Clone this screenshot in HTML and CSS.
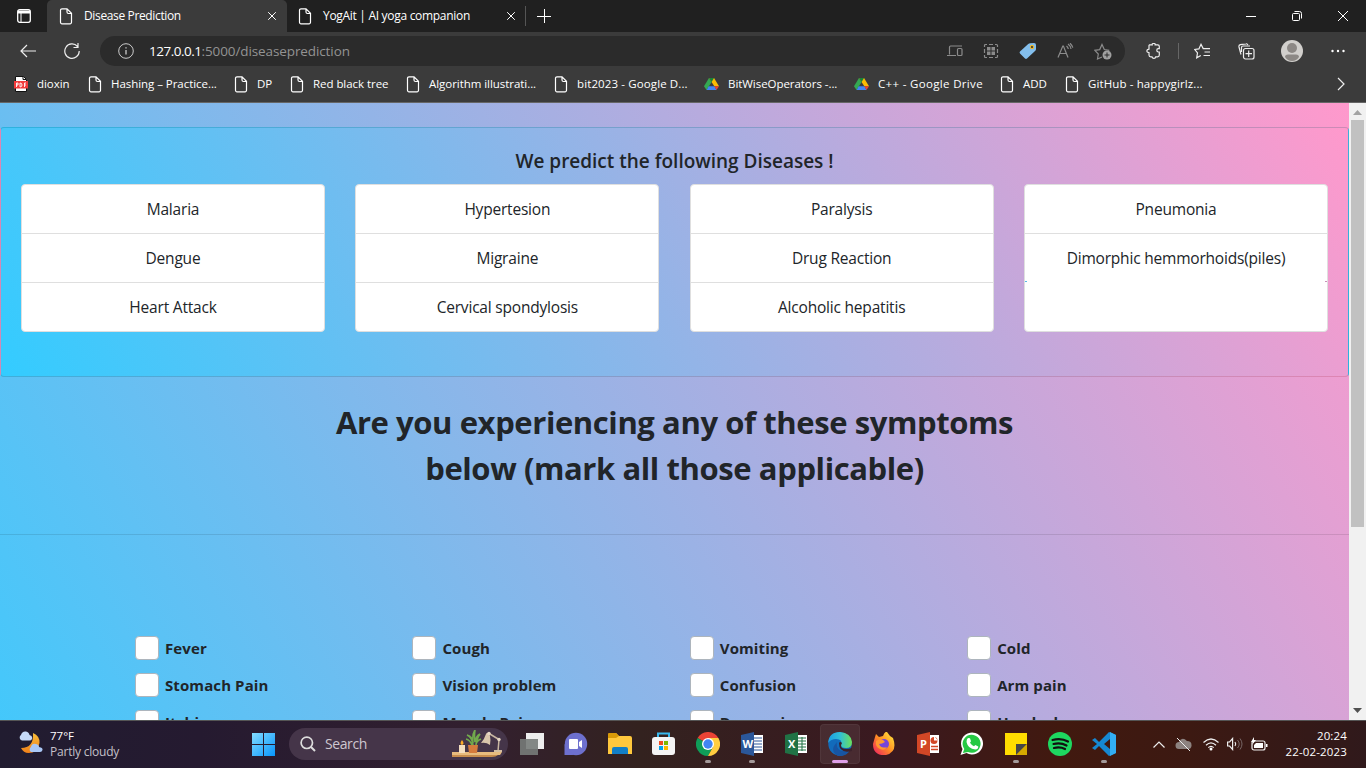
FILE: index.html
```html
<!DOCTYPE html>
<html lang="en">
<head>
<meta charset="utf-8">
<title>Disease Prediction</title>
<link rel="stylesheet" href="styles.css">
</head>
<body>
<svg class="defs" width="0" height="0">
  <symbol id="doc" viewBox="0 0 14 17"><path d="M3 .8h5l4.500 4.500v9a1.500 1.500 0 0 1-1.500 1.500H3a1.500 1.500 0 0 1-1.500-1.500V2.300A1.500 1.500 0 0 1 3 .8zM8 1v3a1.500 1.500 0 0 0 1.500 1.500h3" fill="none" stroke="#fff" stroke-width="1.200"/></symbol>
  <symbol id="drive" viewBox="0 0 16 14"><path d="M5.300.5 0 9.500 2.700 13.500 8 5.200z" fill="#34a853"/><path d="M10.700.5H5.300L11 9.500h5z" fill="#fbbc04"/><path d="M5.300.5h5.400L8 5z" fill="#188038"/><path d="M5 9.500h6.200l2.100 4H2.700z" fill="#4285f4"/><path d="M11 9.500h5l-2.700 4z" fill="#ea4335"/></symbol>
</svg>
<header class="browser">
  <div class="tabs">
    <div class="tab-menu"><svg width="14" height="14" viewBox="0 0 14 14"><rect x=".7" y=".7" width="12.600" height="12.600" rx="2" fill="none" stroke="#fff" stroke-width="1.300"/><path d="M1 1.500h12v3H1z" fill="#fff"/><path d="M4 4v9" stroke="#fff"/></svg></div>
    <div class="tab active"><svg class="doc"><use href="#doc"/></svg><span class="t1">Disease Prediction</span><svg class="close" viewBox="0 0 8 8"><path d="M.2.200l7.600 7.600m0-7.600l-7.600 7.600"/></svg></div>
    <div class="tab"><svg class="doc"><use href="#doc"/></svg><span class="t2">YogAit | AI yoga companion</span><svg class="close" viewBox="0 0 8 8"><path d="M.2.200l7.600 7.600m0-7.600l-7.600 7.600"/></svg></div>
    <i class="tab-line"></i>
    <svg class="plus" width="14" height="14" viewBox="0 0 14 14"><path d="M7.500 0v14M0 7.500h14" stroke="#fff"/></svg>
    <div class="window-buttons">
      <svg width="10" height="10" viewBox="0 0 10 10"><path d="M0 5.500h10"/></svg>
      <svg width="10" height="10" viewBox="0 0 10 10"><rect x=".5" y="2.500" width="7" height="7" rx="1"/><path d="M2.500.5h5a2 2 0 0 1 2 2v5"/></svg>
      <svg width="10" height="10" viewBox="0 0 10 10"><path d="M0 0l10 10m0-10L0 10"/></svg>
    </div>
  </div>
  <div class="toolbar">
    <svg class="back" width="16" height="14" viewBox="0 0 16 14"><path d="M16 7H1m6-6L1 7l6 6" class="line"/></svg>
    <svg class="reload" width="16" height="16" viewBox="0 0 16 16"><path d="M13.500 3.500A7.200 7.200 0 1 0 15.200 8M14 0v4.500H9.500" class="line"/></svg>
    <div class="address">
      <svg width="16" height="16" viewBox="0 0 16 16"><circle cx="8" cy="8" r="7.300" fill="none" stroke="#ccc"/><path d="M8 7v4.500M8 4.300v1.300" stroke="#ccc" stroke-width="1.300"/></svg>
      <span class="url"><b>127.0.0.1</b>:5000/diseaseprediction</span>
      <div class="address-icons">
        <svg width="16" height="16" viewBox="0 0 16 16"><path d="M2.500 11.500V4a1 1 0 0 1 1-1H15M0 12.500h9" class="dim"/><rect x="10.500" y="5.500" width="4.500" height="7" rx="1" class="dim"/></svg>
        <svg width="16" height="16" viewBox="0 0 16 16"><path d="M1.500 4V2.500a1 1 0 0 1 1-1H4M12 1.500h1.500a1 1 0 0 1 1 1V4M14.500 12v1.500a1 1 0 0 1-1 1H12M4 14.500H2.500a1 1 0 0 1-1-1V12M6 1.500h4M6 14.500h4M1.500 6v4M14.500 6v4" class="dim"/><path d="M4 4h3.500v3.500H4zM8.500 4H12v3.500H8.500zM4 8.500h3.500V12H4zM8.500 8.500H12V12H8.500z" fill="#8b8b8b"/></svg>
        <svg width="18" height="18" viewBox="0 0 18 18"><path d="M1 9.500 9.200 2q.8-.7 2-.7L15 1q2 0 2 2v4q0 1-.7 1.800L8 16.500q-1 .9-2 0L1 11.500q-.9-1 0-2z" fill="#83beec"/><circle cx="13" cy="5" r="1.700" fill="#564b32" stroke="#f5bd20"/></svg>
        <svg width="17" height="16" viewBox="0 0 17 16"><path d="M1 14.500 5.800 3h.6L11 14.500M2.600 10.500h7M9.500 3q1.500 1.200 1.800 3M11 1q2.700 2 3 5M13 .2q2.200 2 2.800 4.500" class="dim"/></svg>
        <svg width="18" height="17" viewBox="0 0 18 17"><path d="M8 14l-4.500 2 .8-5L.8 7.300l4.900-.7L8 1.500l2.300 5 5 .8" class="dim"/><circle cx="13" cy="12" r="4.500" fill="#a0a0a0"/><path d="M13 9.500v5M10.500 12h5" stroke="#2b2b2b"/></svg>
      </div>
    </div>
    <div class="tool-icons">
      <svg width="16" height="16" viewBox="0 0 16 16"><path d="M3.500 1.800h2.700q-.3-1.300 1.500-1.300t1.500 1.300h2.500q1.600 0 1.600 1.600v2.200h-1q-1.500 0-1.500 1.700T12.300 9h1v3q0 1.800-1.800 1.800H9.700q-.2 1.500-1.800 1.500T6 13.800H4.800Q3 13.800 3 12V9.700Q.8 9.500.8 8T3 6.200V2.500z" class="line"/></svg>
      <i></i>
      <svg class="fav" width="17" height="16" viewBox="0 0 17 16"><path d="M6.800 12.500l-4.100 2.300.8-4.900L.8 6.500l4.100-.6L7 1.300l2.200 4.300H16M10.500 9H16M9.500 12.500H16" class="line"/></svg>
      <svg class="coll" width="17" height="17" viewBox="0 0 17 17"><rect x="5.500" y="5.500" width="10.500" height="10.500" rx="2" class="line"/><path d="M10.700 7.500v6.500M7.500 10.700H14M3 11.500 1 4q-.4-1.800 1.300-2.300L8 .8q1.300-.3 1.900 1.200M3.500 9V4.500Q3.500 3 5 3h7" class="line"/></svg>
      <svg class="avatar" width="22" height="22" viewBox="0 0 22 22"><circle cx="11" cy="11" r="11" fill="#d1cfcc"/><circle cx="11" cy="8" r="5" fill="#8c8885"/><path d="M4 17q0-2.500 3-2.500h8q3 0 3 2.500-2.500 4-7 4t-7-4z" fill="#8c8885"/></svg>
      <svg class="dots" width="14" height="4" viewBox="0 0 14 4"><g fill="#fff"><circle cx="1.500" cy="2" r="1.200"/><circle cx="7" cy="2" r="1.200"/><circle cx="12.500" cy="2" r="1.200"/></g></svg>
    </div>
  </div>
  <nav class="bookmarks">
    <a class="k0"><svg width="14" height="16" viewBox="0 0 14 16"><path d="M1.500.5h8l3 3v12h-11z" fill="#fff" stroke="#111"/><path d="M9 .5v3h3" fill="none" stroke="#111"/><path d="M0 5h14v7.500H0z" fill="#f33b3b"/><path d="M2.500 11V7H4v2H2.500M6 7v4q2 0 2-2T6 7zM10.500 11V7H12M10.500 9H12" stroke="#fff" stroke-width=".9" fill="none"/></svg><span>dioxin</span></a>
    <a class="k1"><svg class="doc"><use href="#doc"/></svg><span>Hashing – Practice...</span></a>
    <a class="k2"><svg class="doc"><use href="#doc"/></svg><span>DP</span></a>
    <a class="k3"><svg class="doc"><use href="#doc"/></svg><span>Red black tree</span></a>
    <a class="k4"><svg class="doc"><use href="#doc"/></svg><span>Algorithm illustrati...</span></a>
    <a class="k5"><svg class="doc"><use href="#doc"/></svg><span>bit2023 - Google D...</span></a>
    <a class="k6"><svg width="15" height="14"><use href="#drive"/></svg><span>BitWiseOperators -...</span></a>
    <a class="k7"><svg width="15" height="14"><use href="#drive"/></svg><span>C++ - Google Drive</span></a>
    <a class="k8"><svg class="doc"><use href="#doc"/></svg><span>ADD</span></a>
    <a class="k9"><svg class="doc"><use href="#doc"/></svg><span>GitHub - happygirlz...</span></a>
    <svg class="more" width="8" height="14" viewBox="0 0 8 14"><path d="M1 1l6 6-6 6" class="line"/></svg>
  </nav>
</header>
<div class="viewport">
  <main class="page">
    <section class="card">
      <h5>We predict the following Diseases !</h5>
      <div class="lists">
        <ul><li>Malaria</li><li>Dengue</li><li>Heart Attack</li></ul>
        <ul><li>Hypertesion</li><li>Migraine</li><li>Cervical spondylosis</li></ul>
        <ul><li>Paralysis</li><li>Drug Reaction</li><li>Alcoholic hepatitis</li></ul>
        <ul class="short"><li>Pneumonia</li><li>Dimorphic hemmorhoids(piles)</li><li></li></ul>
      </div>
    </section>
    <h1>Are you experiencing any of these symptoms<br>below (mark all those applicable)</h1>
    <hr>
    <div class="symptoms">
      <label><i></i>Fever</label><label><i></i>Cough</label><label><i></i>Vomiting</label><label><i></i>Cold</label>
      <label><i></i>Stomach Pain</label><label><i></i>Vision problem</label><label><i></i>Confusion</label><label><i></i>Arm pain</label>
      <label><i></i>Itching</label><label><i></i>Muscle Pain</label><label><i></i>Depression</label><label><i></i>Headache</label>
    </div>
  </main>
  <aside class="scrollbar"><svg width="9" height="5"><path d="M0 5l4.500-5L9 5z" fill="#a3a3a3"/></svg><div class="thumb"></div><svg class="down" width="9" height="5"><path d="M0 0l4.500 5L9 0z" fill="#505050"/></svg></aside>
</div>
<footer class="taskbar">
  <div class="weather">
    <svg width="25" height="24" viewBox="0 0 25 24"><defs><linearGradient id="moon" x2="0" y2="1"><stop stop-color="#f9bf3a"/><stop offset="1" stop-color="#f08019"/></linearGradient></defs><path d="M15 2q7 3 6.500 10-2 10-11 10-5 0-7.500-5 13 0 12-15z" fill="url(#moon)"/><path d="M3 9a3 3 0 0 1 0-5q1-4 5-3.500 3 .5 3.500 3.500Q15 5 14 8q-.7 1.500-2.500 1.500H4z" fill="#c5daf8"/><path d="M13 21a3 3 0 0 1 0-5q1-4 5-3 3 .5 3 3 4 .5 3.500 3-.5 2-2.500 2z" fill="#aac8f5"/></svg>
    <div><span class="w1">77°F</span><span class="w2">Partly cloudy</span></div>
  </div>
  <svg class="start" width="23" height="23" viewBox="0 0 23 23"><defs><linearGradient id="win" x2="1" y2="1"><stop stop-color="#83dcff"/><stop offset="1" stop-color="#0795fc"/></linearGradient></defs><path d="M0 0h11v11H0zM12 0h11v11H12zM0 12h11v11H0zM12 12h11v11H12z" fill="url(#win)"/></svg>
  <div class="search">
    <svg width="16" height="16" viewBox="0 0 16 16"><circle cx="6.800" cy="6.800" r="5.700" fill="none" stroke="#ddd" stroke-width="1.700"/><path d="M11 11l4 4" stroke="#ddd" stroke-width="2"/></svg><span>Search</span>
    <svg class="plant" width="51" height="28" viewBox="0 0 51 28"><path d="M0 22h50l-2 3H0z" fill="#e7bb7e"/><path d="M0 25h46q-2 2-6 2H0z" fill="#c78d4d"/><path d="M7 15h6v8H7z" fill="#f4dec0"/><path d="M10 10q3 4 0 5-3-1 0-5z" fill="#ffab25"/><path d="M16 15h10l-1 8h-8z" fill="#d57b3c"/><path d="M21 15Q20 7 15 5q6 2 6 8Q20 4 23 0q-1 6 0 12 1-6 5-8-3 4-4 11M20 15q-2-5-6-6M24 15q0-4 5-6" fill="none" stroke="#71a94c" stroke-width="1.600"/><path d="M29 13q3-3 5-9 1-2 3-1l1 3q1 4 0 9-4-3-9-2z" fill="#d9c6ac"/><path d="M37 3.500l10 6-1 12" fill="none" stroke="#c9b7a2" stroke-width="1.500"/><circle cx="37" cy="3.500" r="1.700" fill="#e6d8c5"/><circle cx="47" cy="9.500" r="1.700" fill="#e6d8c5"/><path d="M42 20h8v2h-8z" fill="#d4bea2"/></svg>
  </div>
  <div class="apps">
    <div><svg viewBox="0 0 24 24"><path d="M6 1h18v16H6z" fill="#eee"/><path d="M0 7h18v16H0z" fill="#777b79" opacity=".9"/></svg></div>
    <div><svg viewBox="0 0 24 24"><circle cx="12" cy="12" r="11.200" fill="#6d70ce"/><path d="M.5 23V12l9 11z" fill="#6d70ce"/><rect x="5" y="7" width="9" height="10" rx="1" fill="#fff"/><path d="M15 10l3-2v8l-3-2z" fill="#fff"/></svg></div>
    <div><svg viewBox="0 0 24 24"><path d="M0 3q0-2 2-2h6l3 3h11q2 0 2 2v16H0z" fill="#ffc83d"/><path d="M0 2q0-1 2-1h6l3 3-3 2H0z" fill="#d99a08"/><path d="M4 22v-5q0-2 2-2h12q2 0 2 2v5z" fill="#127fc6"/></svg></div>
    <div><svg viewBox="0 0 24 24"><path d="M6 6V1.500h11V6" fill="none" stroke="#38b8ed" stroke-width="2"/><rect x="0" y="5" width="23" height="18" rx="3" fill="#f4f4f4"/><path d="M7 9h4v4H7z" fill="#f04c22"/><path d="M12 9h4v4h-4z" fill="#7db900"/><path d="M7 14h4v4H7z" fill="#00a3ed"/><path d="M12 14h4v4h-4z" fill="#fdb900"/></svg></div>
    <div class="open"><svg viewBox="0 0 24 24"><path d="M12 12 1.600 6A12 12 0 0 1 22.400 6z" fill="#ea4335"/><path d="M1.600 6A12 12 0 0 0 12 24l5-9-5-3z" fill="#0f9d58"/><path d="M12 24A12 12 0 0 0 22.400 6H12v6l5 3z" fill="#ffcd40"/><circle cx="12" cy="12" r="6" fill="#fff"/><circle cx="12" cy="12" r="4.700" fill="#4285f4"/></svg></div>
    <div class="open"><svg viewBox="0 0 24 24"><path d="M11 3h12v18H11z" fill="#fff"/><path d="M14 6h8M14 9h8M14 12h8M14 15h8M14 18h8" stroke="#2b579a"/><path d="M1 3l13-3v24L1 21z" fill="#2b579a"/><text x="2.500" y="16" class="office">W</text></svg></div>
    <div><svg viewBox="0 0 24 24"><path d="M11 3h12v18H11z" fill="#fff"/><path d="M14 6h8M14 9h8M14 12h8M14 15h8M14 18h8M18 5v14" stroke="#207245"/><path d="M1 3l13-3v24L1 21z" fill="#207245"/><text x="4" y="16" class="office">X</text></svg></div>
    <div class="current"><svg viewBox="0 0 24 24"><defs><linearGradient id="ed" x2="1"><stop stop-color="#1b9de2"/><stop offset=".5" stop-color="#30bfd5"/><stop offset="1" stop-color="#6ce05a"/></linearGradient></defs><circle cx="12" cy="12" r="11.700" fill="#126bbb"/><path d="M0 11Q1 0 12 0q11 1 12 10 0 6-6 6-5 0-5-3 2-6-5-6-5 0-8 4z" fill="url(#ed)"/><path d="M9 10q-2 12 13 8-4 7-12 6-7-4-4-10z" fill="#1755a3"/><path d="M11 11q1-2 3 0-2 3 0 5 4 2 10 0v3q-13 3-13-8z" fill="#3b222b"/></svg></div>
    <div><svg viewBox="0 0 24 24"><defs><linearGradient id="fx" x1="1" x2="0" y2="1"><stop stop-color="#fff33f"/><stop offset=".5" stop-color="#ff8d24"/><stop offset="1" stop-color="#ec1767"/></linearGradient></defs><path d="M3 5l1-3 3 3 4-1q2-5 4-4l3 4 3 2q5 14-7 17Q1 24 1 12z" fill="url(#fx)"/><circle cx="12" cy="12" r="5" fill="#7745da"/><path d="M4 9q6-4 9 1-3 2-6 2 2 5 8 3-2 4-7 2-5-2-4-8z" fill="#ff9930"/></svg></div>
    <div><svg viewBox="0 0 24 24"><path d="M12 3h11v18H12z" fill="#fff"/><circle cx="18" cy="8.500" r="3.500" fill="#d24726"/><path d="M18 8.500V5h1l3 3.500z" fill="#fff"/><path d="M15 14.500h7M15 17.500h7" stroke="#d24726" stroke-width="1.500"/><path d="M1 3l13-3v24L1 21z" fill="#d24726"/><text x="4" y="16" class="office">P</text></svg></div>
    <div><svg viewBox="0 0 24 24"><path d="M.5 23l2-6A11 11 0 1 1 6.500 21z" fill="#fff"/><path d="M2.800 21l1.500-4A9 9 0 1 1 8 20z" fill="#25c943"/><path d="M8 6l2 .3 1 3-1 1.500q2 3 4 3.500l1.300-1.300 3 1.500q0 3-3 3Q8 17 6.500 10 6.500 7 8 6z" fill="#fff"/></svg></div>
    <div class="open"><svg viewBox="0 0 24 24"><path d="M1 1h22v11L12 23H1z" fill="#ffdc00"/><path d="M12 12h11L12 23z" fill="#454547"/><path d="M23 12v11H12z" fill="#d6a900"/></svg></div>
    <div><svg viewBox="0 0 24 24"><circle cx="12" cy="12" r="12" fill="#1ed760"/><path d="M4.500 8q8.500-2.500 15.500 1.500M5.500 12q7-2 13 1.500M6 16q6-1.500 11 1" fill="none" stroke="#111" stroke-width="2.200" stroke-linecap="round"/></svg></div>
    <div class="open"><svg viewBox="0 0 24 24"><path d="M17 0l7 3v18l-7 3L7 14l-4 4-3-2 5-4-5-4 3-2 4 4zm1 7-6 5 6 5z" fill="#1688d2"/><path d="M18 0l6 3v18l-6 3z" fill="#32aef4"/></svg></div>
  </div>
  <div class="tray">
    <svg width="12" height="7"><path d="M.5 6.500 6 1l5.500 5.500" class="line"/></svg>
    <svg width="17" height="14" viewBox="0 0 17 14"><path d="M4 12a3.500 3.500 0 0 1 0-7q3-6 8-1 5 0 4.500 5-.5 3-3 3z" fill="#8d8280"/><path d="M2 1l13 13" stroke="#eee"/></svg>
    <svg class="wifi" width="16" height="13" viewBox="0 0 16 13"><path d="M.5 4.500q7.500-7 15 0M3 7.300q5-4.800 10 0M5.300 9.600q2.700-2.600 5.400 0" class="line"/><circle cx="8" cy="11" r="1.500" fill="#fff"/></svg>
    <svg width="16" height="14" viewBox="0 0 16 14"><path d="M.6 5h2l3-3.500v11L2.600 9h-2z" class="line"/><path d="M8 5q1.500 2 0 4" class="line"/><path d="M10.500 3q3.500 4 0 8M13 1.500q4 5.500 0 11" stroke="#766" fill="none"/></svg>
    <svg width="17" height="15" viewBox="0 0 17 15"><rect x="1" y="4" width="13" height="9" rx="2" class="line"/><path d="M5 6h7v5H3V8zM15 7h1.500v3H15zM3 0 0 5h2L1 8l4-5H3z" fill="#fff"/></svg>
    <time><span>20:24</span><span>22-02-2023</span></time>
  </div>
</footer>
</body>
</html>
```
FILE: styles.css
```css
* { box-sizing: border-box; }
body { margin: 0; width: 1366px; height: 768px; overflow: hidden; display: flex; flex-direction: column; font-family: "Open Sans", "Noto Sans", sans-serif; color: #212529; }
.defs { position: absolute; }
svg { display: block; flex: none; }
.line { fill: none; stroke: #eee; stroke-width: 1.200; }
.dim { fill: none; stroke: #8b8b8b; stroke-width: 1.200; }
.doc { width: 14px; height: 17px; }
.browser { height: 103px; background: #3b3b3b; color: #fff; border-bottom: 1px solid #666; flex: none; font-size: 12px; }
.tabs { height: 32px; background: #202020; display: flex; align-items: center; }
.tab-menu { width: 47px; padding-left: 17px; }
.tab { width: 239px; height: 32px; display: flex; align-items: center; padding: 0 11px; white-space: nowrap; }
.tab.active { width: 240px; padding-left: 12px; background: #3b3b3b; border-radius: 5px 5px 0 0; }
.tab .doc { margin-right: 11px; }
.tab span { margin-top: -1px; }
.t1 { letter-spacing: -.36px; }
.t2 { letter-spacing: -.3px; }
.close { width: 8px; height: 8px; margin-left: auto; stroke: #fff; }
.tab-line { width: 1px; height: 20px; background: #555; margin: 0 11px 0 -1px; }
.window-buttons { margin-left: auto; display: flex; gap: 36px; padding-right: 18px; }
.window-buttons svg { fill: none; stroke: #fff; }
.toolbar { height: 38px; display: flex; align-items: center; padding-left: 20px; }
.reload { margin-left: 28px; }
.address { width: 1025px; height: 30px; margin-left: 20px; background: #2b2b2b; border-radius: 15px; display: flex; align-items: center; padding: 0 13px 0 18px; }
.url { margin-left: 15px; color: #939393; font-size: 13.500px; letter-spacing: -.1px; }
.url b { color: #fff; font-weight: 400; letter-spacing: -.5px; }
.address-icons { margin-left: auto; display: flex; align-items: center; gap: 20px; padding-right: 0; }
.address-icons svg:first-child { margin-left: 2px; }
.tool-icons { display: flex; align-items: center; margin-left: 21px; }
.tool-icons i { width: 1px; height: 16px; background: #666; margin: 0 15px 0 16px; }
.coll { margin-left: 27px; }
.avatar { margin-left: 26px; }
.dots { margin-left: 28px; }
.bookmarks { height: 28px; display: flex; align-items: center; padding-left: 14px; font-size: 11.500px; }
.bookmarks a { display: flex; align-items: center; white-space: nowrap; flex: none; letter-spacing: -.05px; }
.bookmarks a svg { margin-right: 9px; }
.bookmarks span { margin-top: -2px; }
.k0 { width: 74px; } .k1 { width: 146px; } .k2 { width: 56px; } .k3 { width: 116px; } .k4 { width: 148px; }
.k5 { width: 150px; } .k6 { width: 150px; } .k7 { width: 146px; } .k8 { width: 65px; } .k9 { width: 150px; }
.bookmarks .k5, .bookmarks .k9 { letter-spacing: .12px; }
.bookmarks .k7 { letter-spacing: .33px; }
.more { margin-left: auto; margin-right: 21px; }
.viewport { height: 617px; flex: none; display: flex; }
.page { width: 1349px; height: 617px; overflow: hidden; padding-top: 24px; background: linear-gradient(60deg, #33ccff, #ff99cc) 0 0 / 100% 885px; }
.card { height: 250px; padding: 21px 20px; border: 1px solid rgba(0, 0, 0, .125); border-radius: 4px; background: linear-gradient(60deg, #33ccff, #ff99cc); }
h5 { margin: 0 0 11px; line-height: 24px; font-size: 19px; font-weight: 600; text-align: center; letter-spacing: -.01px; }
.lists { display: grid; grid-template-columns: repeat(4, 304px); justify-content: space-between; }
ul { margin: 0; padding: 0; list-style: none; background: #fff; border: 1px solid #dfdfdf; border-radius: 4px; height: 148px; text-align: center; }
li { height: 49px; line-height: 49px; border-bottom: 1px solid #dfdfdf; font-size: 15.500px; letter-spacing: -.2px; white-space: nowrap; }
li:last-child { border: 0; }
.short li:nth-child(2) { border-bottom-color: transparent; background: linear-gradient(#58b8e6, #58b8e6) 0 100% / 2px 1px no-repeat, linear-gradient(#c98fb8, #c98fb8) 100% 100% / 2px 1px no-repeat; }
h1 { margin: 22px 0 43px; text-align: center; font-size: 31px; line-height: 46px; font-weight: 700; letter-spacing: -.41px; }
hr { height: 1px; margin: 0; border: 0; background: rgba(0, 0, 0, .1); }
.symptoms { padding: 101px 0 0 135px; display: grid; grid-template-columns: repeat(4, 277.400px); grid-auto-rows: 37px; }
label { display: flex; height: 24px; align-items: center; font-size: 15px; font-weight: 700; white-space: nowrap; letter-spacing: .1px; }
label i { width: 24px; height: 24px; margin-right: 6px; background: #fff; border: 1px solid #adb5bd; border-radius: 4px; }
.scrollbar { width: 17px; background: #f1f1f1; display: flex; flex-direction: column; align-items: center; padding: 7px 0; }
.thumb { width: 13px; height: 407px; margin-top: 5px; background: #c1c1c1; }
.down { margin-top: auto; }
.taskbar { height: 48px; padding-bottom: 1px; display: flex; align-items: center; background: linear-gradient(90deg, #211c30 0, #251a30 200px, #33202f 480px, #33221f 640px, #3a1920 880px, #41190f 1060px, #3c1912 1190px, #30191b 1366px); border-top: 1px solid #555; color: #fff; font-size: 12px; }
.weather { display: flex; width: 252px; padding-left: 18px; gap: 7px; align-items: center; }
.weather svg { margin-top: -3px; }
.weather span, time span { display: block; line-height: 16px; white-space: nowrap; }
.w1 { font-size: 11.500px; letter-spacing: 0; }
.w2 { color: #c4c0c8; letter-spacing: -.22px; }
.search { width: 219px; height: 32px; border-radius: 16px; margin-left: 14px; background: #453549; display: flex; align-items: center; padding: 0 5px 0 11px; font-size: 14px; color: #cec7d0; letter-spacing: -.4px; }
.search span { margin-left: 9px; margin-top: -1px; }
.plant { margin-left: auto; }
.apps { display: flex; gap: 4px; margin-left: 4px; align-items: center; }
.apps div { position: relative; width: 40px; height: 40px; padding: 8px; border-radius: 4px; }
.apps svg { width: 24px; height: 24px; }
.apps .current { background: rgba(255, 255, 255, .08); box-shadow: inset 0 0 0 1px rgba(255, 255, 255, .05); }
.open::after, .current::after { content: ""; position: absolute; bottom: 1px; left: 17px; width: 6px; height: 3px; border-radius: 2px; background: #a49a9a; }
.current::after { left: 12px; width: 16px; background: #df9fe8; }
.office { font: 700 11px "Open Sans", sans-serif; fill: #fff; }
.tray { margin-left: auto; display: flex; align-items: center; padding-right: 19px; }
.tray svg { margin-right: 8px; }
.tray svg:first-child { margin-right: 10px; }
.tray svg:nth-child(2) { margin-right: 11px; }
time { width: 63px; margin-left: 8px; text-align: right; font-size: 11.500px; letter-spacing: .15px; }
```
